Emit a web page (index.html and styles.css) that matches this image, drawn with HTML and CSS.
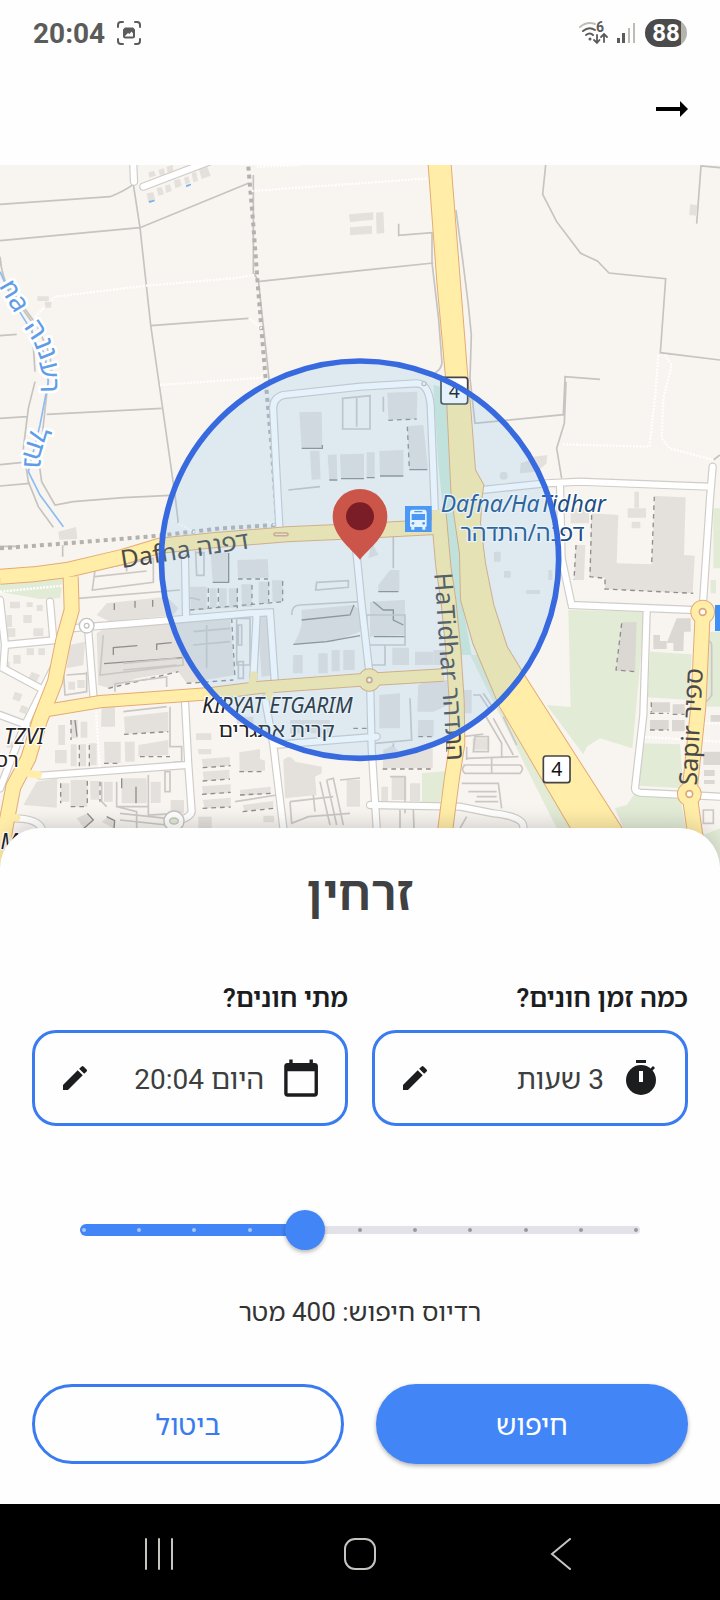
FILE: index.html
```html
<!DOCTYPE html>
<html lang="he" dir="rtl">
<head>
    <meta charset="UTF-8">
    <meta name="viewport" content="width=device-width, initial-scale=1.0">
    <title>זרחין</title>
    <link rel="stylesheet" href="styles.css">
</head>
<body>

    <!-- Status bar -->
    <div class="status-bar" dir="ltr">
        <span class="clock">20:04</span>
        <svg class="status-shot" viewBox="0 0 24 24" fill="none" stroke="#5a5c5a" stroke-width="2" stroke-linecap="round">
            <path d="M1 6V4a3 3 0 0 1 3-3h2M18 1h2a3 3 0 0 1 3 3v2M23 18v2a3 3 0 0 1-3 3h-2M6 23H4a3 3 0 0 1-3-3v-2"/>
            <path fill="#5a5c5a" fill-rule="evenodd" stroke="none" d="M8 6.500h8l2 2V15a2.500 2.500 0 0 1-2.500 2.500h-7A2.500 2.500 0 0 1 6 15V8.500zM8 15.500h8v-3l-1.500-2-2 2.500-1.500-1-3 3z"/>
        </svg>
        <div class="status-icons">
            <svg class="wifi" viewBox="0 0 30 24" fill="none" stroke="#5a5c5a" stroke-width="2" stroke-linecap="round">
                <path stroke="#bdbdb8" d="M1 6Q8 0 16 3"/>
                <path d="M4 10q6-5 12-1M7 14q4-3 7 0"/>
                <circle cx="11" cy="18" r="1.500" fill="#5a5c5a" stroke="none"/>
                <path stroke-width="1.800" d="M18 14v8m-3-3 3 3 2.500-3M25 21v-8m-3 3 3-3 3 3"/>
                <text class="wifi-gen" x="17" y="11">6</text>
            </svg>
            <svg class="signal" viewBox="0 0 20 20">
                <path fill="#5a5c5a" d="M0 15h3v5H0zM5 10h3v10H5z"/>
                <path fill="#bdbdb8" d="M11 5h2v15h-2zM16 0h2v20h-2z"/>
            </svg>
            <span class="battery">88</span>
        </div>
    </div>

    <!-- App bar -->
    <div class="app-bar">
        <button class="back-button" aria-label="חזרה">
            <svg viewBox="0 0 32 16"><path d="M0 6h24V0l8 8-8 8v-6H0z"/></svg>
        </button>
    </div>

    <!-- Map -->
    <svg class="map" viewBox="0 0 2160 2112" preserveAspectRatio="xMidYMin slice" direction="ltr">
        <!-- Parks -->
        <g class="park">
            <path d="M0 1255 100 1245 190 1240 180 1300 120 1302 0 1280z"/>
            <path d="M1705 1335 1935 1340 1897 1750 1800 1720 1760 1745 1750 1768 1640 1620 1712 1626z"/>
            <path d="M1950 1460 2075 1468 2068 1605 1943 1597zM1925 1735 2040 1738 2050 1870 1915 1862z"/>
            <path d="M1845 1930 1880 1920 1905 1885 2040 1895 2060 2000 1870 1990z"/>
            <path d="M1410 1470 1440 1470 1500 1610 1570 1750 1720 1989 1670 1989 1535 1720zM1266 1825 1340 1818 1320 1910 1266 1920z"/>
            <path d="M2140 1030h20v180h-20zM2132 1245h16v40h-16zM2120 1400h40v225h-40zM2110 2010 2160 1990v110z"/>
            <path fill="#d3ead9" d="M1300 660 1340 670 1355 995 1385 1165 1385 1305 1415 1470 1378 1470 1355 1250 1330 1040 1315 900z"/>
        </g>

        <!-- Fields and tracks -->
        <g class="track">
            <path d="M0 118 330 95 Q370 80 400 58M0 227 420 188 745 55M400 58 420 188 452 480 480 675 488 730 525 990 535 1075"/>
            <path d="M452 482 745 460M760 30V325L775 345 808 650M780 349 1080 317 1300 294M1637 0 1628 88 1670 170 1742 265 1792 288 1827 324 1997 341 1981 563 2160 585M2090 176 2103 3 2160 8"/>
            <path d="M1196 176v35l100-8v90l20 170 10 130q-2 20-20 30M1368 135 1390 300 1405 420 1414 510 1410 640 1425 775 1690 749 1695 640v-5l105 8M1698 650 1693 775 1670 850 1685 940M2160 870 2140 885"/>
            <path d="M0 760 80 755M140 748 485 730M0 899 70 892M0 963 90 955M30 370 110 480 150 570 155 620M0 275Q5 350 45 400L95 470 105 620M105 650 85 730 70 850 85 950 115 1025 160 1087M150 600 130 780 118 900 125 950 165 1020 220 1010 370 998 510 991M0 512 50 508"/>
            <path d="M188 1140v35M0 1144h60M1180 1110v100M865 975 960 965"/>
        </g>
        <path class="rail" d="M745 5 760 180 775 380 800 680 815 850 832 1080M0 1150 200 1135 480 1112 660 1090 830 1080"/>
        <g class="footpath">
            <path d="M755 78 1080 55 1285 40M105 455 165 395 440 362 700 340 765 330M480 660 790 638M750 462 785 490M770 5 900 0M535 1075 590 1105"/>
            <path d="M1975 570 1965 700 1948 845 1685 838M1995 570 2015 600 1990 700 1985 820 2010 850 2140 885M0 1280 190 1262M1925 1715 2160 1730M2105 1675h55M288 1640 300 1810M800 1070 860 1095"/>
        </g>

        <!-- River -->
        <path class="river" d="M0 320 40 410 90 490 135 570 145 650 120 780 85 920 120 990 190 1085"/>

        <!-- Buildings -->
        <g class="building">
            <path d="M445 22 462 17 468 32 448 38zM475 15 492 10 495 28 480 32zM500 5 518 0 520 18 503 24zM440 85 460 82 465 104 445 110zM470 70 485 66 492 88 475 92zM495 62 510 58 515 78 498 84zM522 46 540 42 545 62 526 70zM552 38 565 34 570 54 556 58zM575 25 588 20 594 48 580 52zM595 5 620 0 632 32 605 42z"/>
            <path d="M1047 148 1120 142v22l-70 7zM1050 187 1116 182v24l-66 5zM1128 143 1150 141 1153 204 1130 206zM112 394h34v14h-34zM134 410h20v18h-18zM2070 118 2092 120 2090 152 2068 150zM175 1100 228 1086 232 1122 178 1124z"/>
            <path d="M898 742 965 740 967 848 905 850zM930 858 958 857 962 943 935 944zM983 870 1010 868 1012 942 988 945zM1020 868 1092 866 1092 940 1023 942zM1100 862h24v74h-24zM1138 858 1210 855v75l-70 3zM1162 683 1252 680 1250 762 1165 766zM1222 783 1270 780 1284 912 1228 914z"/>
            <path d="M632 1166 685 1162 685 1250 638 1252zM712 1185 803 1182 806 1238 714 1242zM570 1265h50v70h-48zM628 1270h22v60h-20zM656 1270h24v60h-22zM686 1270h26v58h-24zM724 1258h32v68h-30zM776 1250h30v66h-30zM816 1246h32v66h-30z"/>
            <path d="M1562 895 1592 885 1600 875 1642 870 1640 895 1610 920 1560 925z"/>
            <circle cx="1511" cy="932" r="12"/>
            <path d="M1965 993 2057 997 2052 1170 2084 1172 2078 1285 1815 1272V1238L1768 1236 1775 1045 1855 1050 1850 1195 1955 1198zM1728 1140h28l-4 105h-30zM1712 1030h55v45h-55zM1883 1030h55v28h-55zM1903 980h14v48h-14zM1895 1070h26v20h-26z"/>
            <path d="M1482 1160h20v30h-20zM1512 1218h20v20h-20zM1645 1215h12v30h-12zM1578 1275h42v12h-42zM1170 1215 1198 1215 1198 1280 1135 1280 1135 1260zM1115 1130 1135 1170 1105 1180z"/>
            <path d="M290 1405 320 1385 500 1370 560 1345 690 1355 705 1530 560 1555 535 1520 410 1540 330 1570 295 1560z"/>
            <path d="M320 1315 500 1295 535 1330 520 1350 330 1370 290 1350zM210 1440 255 1430 250 1500 200 1510zM205 1550h20v24h-20zM232 1545h22v24h-22z"/>
            <path d="M905 1335 1060 1320 1080 1335 1080 1400 1000 1430 880 1440 895 1410 905 1380zM1110 1310 1215 1305 1215 1410 1110 1415zM880 1470h28v55h-30zM955 1465h28v60h-28zM995 1455h24v64h-24zM1030 1455h34v60h-34z"/>
            <path d="M770 1345h45l10 185-40 5zM1177 1448h50v52h-50zM1245 1460h54v40h-54zM1300 1455h40v45h-40zM1255 1560 1290 1545 1350 1545 1345 1620 1300 1640h-48zM1138 1590 1200 1585V1690h-62zM1255 1665h46v50h-48zM1385 1575h30v70h-28z"/>
            <path d="M305 1625h40v60h-42zM372 1655 505 1640v60l-130 6zM175 1680h20v60h-20zM213 1665h20v55h-20zM242 1670h20v48h-20zM165 1755h35v40h-35zM212 1738h18v66h-18zM238 1738h20v66h-20zM268 1735h22v66h-22zM312 1730h50v64h-48zM374 1730h30v60h-28zM415 1740 505 1725v45l-90 5z"/>
            <path d="M70 1920 110 1850 172 1840 170 1928zM182 1855h26v55h-26zM212 1845h50v80h-50zM270 1848h28v56h-26zM312 1850h26v60h-26zM365 1840h75v75h-75zM452 1850h30v64h-30zM512 1905h40v40h-40zM230 1960 262 1945 280 1965 252 1990zM305 1970 325 1955 345 1965 340 1990zM595 1955h40v34h-40z"/>
            <path d="M588 1705h46v20h-46zM594 1752h40v16h-38zM605 1782 690 1776v26l-80 6zM608 1820 688 1814v28l-76 6zM606 1864 692 1858v26l-82 4zM608 1905 692 1898v28l-78 4zM718 1762 780 1752v30l15 5v30l-76 4zM720 1875 812 1865v20l-90 8zM728 1920 820 1908v20l-86 10zM790 1952h32v20h-32zM710 1655h50v35h-50zM870 1665h120v40H870z"/>
            <path d="M850 1785q20-20 35 5l80 15v20l-20 10 5 55-95 10zM1040 1845h40v80h-40zM1150 1755 1180 1740 1200 1765 1240 1745 1298 1750v60h-150zM1175 1835h44v70h-44zM1144 1865h20v46h-20zM1230 1855h30v54h-30zM1418 1720h50v34h-50z"/>
            <path d="M30 1310h30v20H30zM80 1312h18v14H80zM20 1350h16v36H20zM70 1350h25v24H70zM110 1320h18v18h-18zM20 1390h26v26H20zM100 1390h30v24h-30zM80 1450h22v20H80zM115 1450h20v20h-20zM40 1470h22v26H40zM95 1520l25 10-12 24-24-10zM45 1580l22 8-8 22-22-8zM15 1490h14v22H15zM65 1620l20 8-8 20-20-8zM20 1730h18v18H20z"/>
            <path fill="#dbd7d2" d="M1865 1372h45l-5 146h-55zM2030 1360h42v40h-20l-2 58h-30v-24h-20zM1960 1410h20v18h20v24h-40zM1954 1612h56v30h-56zM2018 1618h36v28h-36zM1950 1665h56v30h-56zM2016 1665h38v34h-38zM2132 1650h28v20h-28zM2110 1760h50v40h-50zM2112 1815h32v18h-32zM2112 1845h32v12h-32z"/>
        </g>
        <g class="pool">
            <path d="M446 108 464 104v5l-16 5zM558 60 573 56v5l-14 6z"/>
        </g>

        <!-- Dark sides of the buildings -->
        <g class="shade">
            <path d="M905 850h62v-10M988 945h24M1023 941h69M638 1252h48v-88M1228 914h54M1100 938h24M1140 933h70M1135 1280h60M905 1365 1050 1350 1062 1320M880 1438 980 1430 1080 1412M340 1470v-22l72-6M470 1455v-18l45-4M312 1496 550 1478M1120 1310 1150 1335h30v30l30 15M1122 1415h95"/>
            <path stroke-dasharray="14 12" d="M1728 1140 1722 1245M1775 1050 1770 1235 1815 1240V1272L2080 1285M1963 995 1955 1195M1165 766 1250 762M1222 785 1228 910M1865 1375 1848 1515 1905 1520M570 1335 850 1310M625 1270v60M655 1270v60M712 1270v60M756 1260v60M806 1250v60M848 1248v60M714 1242h90M372 1708 505 1700M213 1665v60M238 1740v64M268 1740v64M312 1795h50M420 1775h90M182 1855v60M212 1925h50M262 1848v70M300 1850v60M608 1808 692 1802M608 1848 690 1842M606 1888 692 1882M608 1930 692 1926M720 1890 812 1885M728 1940 820 1930M718 1820h76M695 1360l10 180M560 1555 700 1545M325 1570 535 1520M1060 1690h60M1255 1715h46M1148 1812h150M1950 1645h56M1950 1695h56M1954 1612v30M2018 1648h36"/>
            <path d="M343 1315v20M405 1308v20M458 1305v20M262 1945 280 1965 252 1990M320 1955l24 12-2 23M365 1840v30M408 1865v50M225 1665l6 50M1340 1720v40"/>
        </g>

        <!-- Small lanes drawn as outlines -->
        <g class="lane">
            <path d="M285 1215 460 1180V1252L277 1275zM285 1235 440 1218M380 1195v24M235 1300 540 1275M590 1163h22v68h-22l-3-70zM950 1252 1045 1247v20l-98 8zM1070 695v90M1028 700 1110 692v100h-82zM1150 740v-45M875 1350q0-30 25-30l180-10M700 1360h50v140h-40v-140M715 1380h10v60h-10zM715 1490h15v50h-15zM345 1580v-24l155-20v30M370 1640 500 1625M510 1625v120h35v45l-130 15M190 1510l5 80 65-10v-60M200 1530 262 1525"/>
            <path d="M305 1850v60l15 15M350 1850v75l60 15v50M445 1830v120l90-5M360 1945 500 1960M360 1965 500 1980M350 1925h95M495 1820h15v60h-15zM705 1910 830 1890M870 1910l5 65 50-20 125-10M870 1910 1000 1895M940 1890l5 50M960 1850l30 130M980 1845l30 135M980 1845l20-5 30 140M1020 1845l60-6"/>
            <path d="M1095 1440h60v60h-60zM1125 1735l110-10-5-125M1100 1350h115v90h-115zM1130 1960 1125 1940M1170 1835h45v110M1180 1735v10M1455 1650l50 85v40M1390 1715l60-8M1400 1780l155-5M1390 1800h170q15 10 0 25h-165q-15-12 0-25M1475 1775v50M1385 1855h110l10 75M1405 1880h85M1430 1895h60M1425 1910h70M1480 1660l60 110M1510 1655l40 85M1420 1590h20l30 45M1450 1585l30 45M1425 1715h40v45h-45zM1400 1745v40M2110 1935h30v40h-30zM2115 1435q15-15 20 5v150q-10 20-30 25M1240 1935l2 54M1200 1935v54M1400 1955l-20 35M600 1305q-60-20-45 25M310 1410 300 1530 550 1500 545 1440M580 1400 690 1390M580 1440 690 1430M620 1380v130M370 1515 530 1500M370 1495 530 1480"/>
        </g>

        <!-- Streets -->
        <g class="street-case">
            <path d="M400 0 402 50M430 65 640-15"/>
            <path d="M838 1085 828 900 820 740Q815 700 850 690L1080 665 1250 655Q1285 655 1292 720L1305 1050"/>
            <path d="M1445 975 1640 955 1740 950 2130 965M2138 905 2130 1000 2108 1330M1680 960 1685 1180 1715 1320 2080 1335M1940 1340 1930 1650 1905 1870Q1905 1880 1920 1883L2060 1890 2160 1895"/>
            <path d="M555 1180 558 1350M215 1390 270 1385 400 1375 750 1345 810 1342 825 1560M265 1400 280 1590M770 1350 760 1540M1065 1120 1085 1320 1110 1540 1115 1750 1130 1989M555 1610 565 1800 575 1940Q570 1960 520 1970M120 1832 560 1800M795 1600 820 1740 850 1989M820 1740 1130 1715"/>
            <path d="M0 1305 15 1440 170 1425M150 1310 160 1425M15 1440 10 1510 140 1580M160 1510 70 1690 0 1870M0 1650 80 1680M40 1960Q110 1960 125 1990M1110 1920 1380 1925 1480 1945Q1575 1955 1570 1989"/>
        </g>
        <g class="street">
            <path d="M400 0 402 50M430 65 640-15"/>
            <path d="M838 1085 828 900 820 740Q815 700 850 690L1080 665 1250 655Q1285 655 1292 720L1305 1050"/>
            <path d="M1445 975 1640 955 1740 950 2130 965M2138 905 2130 1000 2108 1330M1680 960 1685 1180 1715 1320 2080 1335M1940 1340 1930 1650 1905 1870Q1905 1880 1920 1883L2060 1890 2160 1895"/>
            <path d="M555 1180 558 1350M215 1390 270 1385 400 1375 750 1345 810 1342 825 1560M265 1400 280 1590M770 1350 760 1540M1065 1120 1085 1320 1110 1540 1115 1750 1130 1989M555 1610 565 1800 575 1940Q570 1960 520 1970M120 1832 560 1800M795 1600 820 1740 850 1989M820 1740 1130 1715"/>
            <path d="M0 1305 15 1440 170 1425M150 1310 160 1425M15 1440 10 1510 140 1580M160 1510 70 1690 0 1870M0 1650 80 1680M40 1960Q110 1960 125 1990M1110 1920 1380 1925 1480 1945Q1575 1955 1570 1989"/>
        </g>
        <g class="island">
            <circle cx="260" cy="1382" r="22"/><circle cx="260" cy="1382" r="7"/>
            <circle cx="522" cy="1968" r="30"/><ellipse cx="522" cy="1968" rx="13" ry="9" fill="#deebd0"/>
            <circle cx="1272" cy="656" r="6"/>
        </g>

        <!-- Main roads -->
        <g class="road-case">
            <path d="M0 1235 100 1228 200 1215 370 1175 480 1142 640 1126 860 1108 1080 1098 1320 1085"/>
            <path d="M212 1235 215 1335 190 1425 165 1550 120 1665 85 1780 40 1865 15 1995 0 2112"/>
            <path d="M120 1640 300 1610 640 1585 780 1567 1080 1545 1330 1530" stroke-width="40"/>
            <path d="M1315 1035 1330 1205 1345 1305 1360 1455 1370 1605 1372 1735 1355 1845 1335 2000"/>
            <path d="M2108 1345 2095 1625 2068 1885 2085 2005 2110 2112"/>
            <circle cx="2108" cy="1341" r="34"/><circle cx="2068" cy="1887" r="34"/><circle cx="1108" cy="1545" r="32"/>
            <path d="M1286 0 1312 350 1338 635 1342 720 1355 995 1380 1165 1383 1305 1420 1435 1500 1625 1640 1865 1760 2070 1910 2070 1865 1989 1575 1535 1520 1445 1480 1320 1455 1195 1440 1075 1445 995 1450 960 1425 915 1410 720 1402 635 1352 0z" stroke-width="6"/>
        </g>
        <g class="road">
            <path d="M0 1235 100 1228 200 1215 370 1175 480 1142 640 1126 860 1108 1080 1098 1320 1085"/>
            <path d="M212 1235 215 1335 190 1425 165 1550 120 1665 85 1780 40 1865 15 1995 0 2112"/>
            <path d="M120 1640 300 1610 640 1585 780 1567 1080 1545 1330 1530" stroke-width="34"/>
            <path d="M1315 1035 1330 1205 1345 1305 1360 1455 1370 1605 1372 1735 1355 1845 1335 2000"/>
            <path d="M2108 1345 2095 1625 2068 1885 2085 2005 2110 2112"/>
            <path d="M762 1530 755 1560M805 1595 812 1570M85 1825 115 1830M20 1960 50 1958" stroke-width="22" stroke-linecap="round"/>
            <g fill="#ffeda8" stroke="none">
                <circle cx="2108" cy="1341" r="34"/><circle cx="2068" cy="1887" r="34"/><circle cx="1108" cy="1545" r="32"/>
                <path d="M1286 0 1312 350 1338 635 1342 720 1355 995 1380 1165 1383 1305 1420 1435 1500 1625 1640 1865 1760 2070 1910 2070 1865 1989 1575 1535 1520 1445 1480 1320 1455 1195 1440 1075 1445 995 1450 960 1425 915 1410 720 1402 635 1352 0z"/>
            </g>
        </g>
        <g class="roundabout">
            <circle cx="2108" cy="1341" r="10"/><circle cx="2068" cy="1887" r="10"/><circle cx="1108" cy="1545" r="8"/>
            <rect x="822" y="1104" width="42" height="8" rx="4"/>
        </g>

        <!-- Bus stops -->
        <path fill="#3f8ff7" d="M1215 1023h80v78h-80zM2145 1320h15v78h-15z"/>
        <g fill="#fff">
            <path d="M1236 1034h38q6 0 6 8v40q0 4-4 4v8h-9v-8h-24v8h-9v-8q-4 0-4-4v-40q0-8 6-8z"/>
            <path fill="#3f8ff7" d="M1235 1047h40v18h-40zM1243 1038h24v4h-24z"/>
            <circle cx="1239" cy="1075" r="4" fill="#3f8ff7"/><circle cx="1271" cy="1075" r="4" fill="#3f8ff7"/>
        </g>

        <!-- Labels -->
        <path id="river-line" fill="none" d="M-15 345 50 455 100 530 120 580 122 680 100 770 75 850 68 960"/>
        <g class="map-label river-label">
            <text><textPath href="#river-line" startOffset="20">na</textPath></text>
            <text><textPath href="#river-line" startOffset="165">רעננה</textPath></text>
            <text><textPath href="#river-line" startOffset="475">נחל</textPath></text>
        </g>
        <g class="map-label street-label">
            <text transform="translate(366 1210) rotate(-9)">Dafna דפנה</text>
            <text transform="translate(1303 1225) rotate(86)">HaTidhar התדהר</text>
            <text transform="translate(2090 1862) rotate(-87)">Sapir ספיר</text>
        </g>
        <g class="map-label area-label">
            <text x="832" y="1645">KIRYAT ETGARIM</text>
            <text x="830" y="1717" class="upright">קרית אתגרים</text>
            <text x="72" y="1737">TZVI</text>
            <text x="20" y="1806" class="upright">רס</text>
            <text x="28" y="2052">M</text>
        </g>
        <g class="map-label stop-label">
            <text x="1570" y="1042">Dafna/HaTidhar</text>
            <text x="1567" y="1128" class="upright">דפנה/התדהר</text>
        </g>
        <g class="shield">
            <rect x="1323" y="637" width="80" height="80" rx="8"/>
            <text x="1363" y="698">4</text>
            <rect x="1630" y="1773" width="80" height="80" rx="8"/>
            <text x="1670" y="1834">4</text>
        </g>

        <!-- Search radius and pin -->
        <circle class="radius-area" cx="1080" cy="1184" r="596"/>
        <path fill="#cb5549" d="M1080 1184C1050 1148 998 1112 998 1054a82 82 0 0 1 164 0C1162 1112 1110 1148 1080 1184z"/>
        <circle cx="1080" cy="1054" r="42" fill="#7b1d27"/>
    </svg>

    <!-- Search sheet -->
    <div class="sheet">
        <h1>זרחין</h1>

        <div class="fields">
            <div class="field">
                <label for="duration">כמה זמן חונים?</label>
                <button id="duration" class="picker">
                    <svg class="picker-icon" viewBox="0 0 44 44">
                        <circle cx="22" cy="24" r="15"/>
                        <path d="M17 4h10v3H17zM31 13l3-3 2 2-3 3z"/>
                        <path fill="#fff" d="M20 15h4v11h-4z"/>
                    </svg>
                    <span class="picker-value">3 שעות</span>
                    <svg class="edit-icon" viewBox="0 0 24 24"><path d="M3 17.250V21h3.750L17.810 9.940l-3.750-3.750zM20.710 7.040a1 1 0 0 0 0-1.410l-2.340-2.340a1 1 0 0 0-1.410 0l-1.830 1.830 3.750 3.750z"/></svg>
                </button>
            </div>
            <div class="field">
                <label for="start">מתי חונים?</label>
                <button id="start" class="picker">
                    <svg class="picker-icon" viewBox="0 0 24 24"><path d="M20 3h-1V1h-2v2H7V1H5v2H4a2 2 0 0 0-2 2v16a2 2 0 0 0 2 2h16a2 2 0 0 0 2-2V5a2 2 0 0 0-2-2zm0 18H4V8h16z" transform="translate(1 1) scale(.92)"/></svg>
                    <span class="picker-value">היום 20:04</span>
                    <svg class="edit-icon" viewBox="0 0 24 24"><path d="M3 17.250V21h3.750L17.810 9.940l-3.750-3.750zM20.710 7.040a1 1 0 0 0 0-1.410l-2.340-2.340a1 1 0 0 0-1.410 0l-1.830 1.830 3.750 3.750z"/></svg>
                </button>
            </div>
        </div>

        <div class="slider" dir="ltr">
            <div class="slider-track"></div>
            <div class="slider-fill"></div>
            <div class="slider-ticks">
                <i></i><i></i><i></i><i></i><i></i><i></i><i></i><i></i><i></i><i></i><i></i>
            </div>
            <input type="range" id="radius" min="0" max="1000" step="100" value="400">
        </div>
        <label class="radius-text" for="radius">רדיוס חיפוש: 400 מטר</label>

        <div class="actions">
            <button class="btn btn-primary">חיפוש</button>
            <button class="btn btn-outline">ביטול</button>
        </div>
    </div>

    <!-- System navigation -->
    <div class="nav-bar" dir="ltr">
        <button aria-label="Recents"><svg viewBox="0 0 32 32"><path d="M3 1v30M16 1v30M29 1v30"/></svg></button>
        <button aria-label="Home"><svg viewBox="0 0 32 32"><rect x="1" y="1" width="30" height="30" rx="10"/></svg></button>
        <button aria-label="Back"><svg viewBox="0 0 32 32"><path d="M25 1 7 16l18 15"/></svg></button>
    </div>

</body>
</html>
```
FILE: styles.css
```css
/* General Styles */
* {
    box-sizing: border-box;
}

body {
    margin: 0;
    min-height: 100vh;
    display: flex;
    flex-direction: column;
    font-family: Roboto, "Noto Sans Hebrew", "Open Sans", "Noto Sans", sans-serif;
    background: #fefefe;
    color: #1c1d1e;
}

button {
    padding: 0;
    border: none;
    background: none;
    font: inherit;
    color: inherit;
    cursor: pointer;
}

/* Status Bar */
.status-bar {
    display: flex;
    align-items: center;
    height: 66px;
    padding: 0 33px;
    color: #5a5c5a;
}

.clock {
    font-size: 28px;
    font-weight: bold;
}

.status-shot {
    width: 24px;
    height: 24px;
    margin-left: 12px;
}

.status-icons {
    display: flex;
    align-items: center;
    gap: 8px;
    margin-left: auto;
}

.wifi {
    width: 30px;
    height: 24px;
    overflow: visible;
}

.wifi-gen {
    font-size: 14px;
    font-weight: bold;
    fill: #5a5c5a;
    stroke: none;
}

.signal {
    width: 20px;
    height: 20px;
}

.battery {
    width: 42px;
    line-height: 28px;
    border-radius: 14px;
    text-align: center;
    font-size: 24px;
    font-weight: bold;
    color: #fff;
    background: linear-gradient(to right, #4b4b4b 86%, #b4b4ae 86%);
}

/* App Bar */
.app-bar {
    height: 99px;
    padding: 27px 32px;
}

.back-button {
    display: flex;
    align-items: center;
    width: 32px;
    height: 32px;
}

.back-button svg {
    width: 32px;
    height: 16px;
}

/* Map */
.map {
    display: block;
    width: 100%;
    height: 704px;
    background: #f8f4f0;
}

.park {
    fill: #e2ebd6;
}

.track {
    fill: none;
    stroke: #c6c4c0;
    stroke-width: 5;
}

.rail {
    fill: none;
    stroke: #b4b2af;
    stroke-width: 12;
    stroke-dasharray: 12 12;
}

.footpath {
    fill: none;
    stroke: #fff;
    stroke-width: 7;
    stroke-dasharray: 6 4;
}

.river {
    fill: none;
    stroke: #8dbcf2;
    stroke-width: 5;
}

.building {
    fill: #e4e0db;
}

.pool {
    fill: #74b2f0;
}

.shade {
    fill: none;
    stroke: #8f8e8c;
    stroke-width: 4;
}

.lane {
    fill: none;
    stroke: #cac8c5;
    stroke-width: 5;
}

.street-case {
    fill: none;
    stroke: #d0cdc9;
    stroke-width: 25;
    stroke-linecap: round;
}

.street {
    fill: none;
    stroke: #fff;
    stroke-width: 18;
    stroke-linecap: round;
}

.island {
    fill: #fff;
    stroke: #c6c4c0;
    stroke-width: 4;
}

.road-case {
    fill: none;
    stroke: #e5ab72;
    stroke-width: 48;
}

.road-case circle {
    stroke-width: 6;
}

.road {
    fill: none;
    stroke: #ffeda8;
    stroke-width: 42;
}

.roundabout {
    fill: #fff;
    stroke: #e0a673;
    stroke-width: 5;
}

.map-label {
    font-family: "Noto Sans", "Noto Sans Hebrew", "Open Sans", sans-serif;
    paint-order: stroke;
    stroke: #fff;
    stroke-width: 8;
    stroke-linejoin: round;
}

.river-label {
    font-size: 84px;
    fill: #5f9de6;
    stroke-width: 16;
}

.street-label {
    font-size: 75px;
    fill: #4a4a4a;
    stroke: none;
}

.area-label {
    font-size: 63px;
    font-style: italic;
    fill: #222;
    text-anchor: middle;
}

.stop-label {
    font-size: 69px;
    font-style: italic;
    fill: #1d4f85;
    text-anchor: middle;
}

.area-label .upright,
.stop-label .upright {
    font-style: normal;
}

.shield rect {
    fill: #fff;
    stroke: #444;
    stroke-width: 5;
}

.shield text {
    font-family: "Noto Sans", sans-serif;
    font-size: 58px;
    text-anchor: middle;
    fill: #111;
}

.radius-area {
    fill: rgba(123, 189, 240, 0.2);
    stroke: #3769df;
    stroke-width: 17;
}

/* Search Sheet */
.sheet {
    position: relative;
    margin-top: -41px;
    padding: 34px 32px 40px;
    border-radius: 40px 40px 0 0;
    background: #fefefe;
    box-shadow: 0 -4px 20px rgba(0, 0, 0, 0.15);
}

.sheet h1 {
    margin: 0 0 56px;
    text-align: center;
    font-size: 48px;
    line-height: 64px;
    font-weight: 600;
    color: #3f4143;
}

.fields {
    display: flex;
    gap: 24px;
}

.field {
    flex: 1;
}

.field label {
    display: block;
    margin-bottom: 16px;
    font-size: 26px;
    line-height: 32px;
    font-weight: 600;
}

.picker {
    display: flex;
    align-items: center;
    width: 100%;
    height: 96px;
    padding: 0 22px 0 24px;
    border: 3px solid #3a7cf0;
    border-radius: 24px;
}

.picker-icon {
    width: 44px;
    height: 44px;
    margin-left: 15px;
    fill: #1c1d1e;
}

.picker-value {
    font-size: 28px;
    color: #3c3e40;
}

.edit-icon {
    width: 32px;
    height: 32px;
    margin-right: auto;
    fill: #1c1d1e;
}

/* Radius Slider */
.slider {
    display: grid;
    align-items: center;
    margin: 84px 32px 46px;
}

.slider > * {
    grid-area: 1 / 1;
}

.slider-track {
    height: 8px;
    margin: 0 16px;
    border-radius: 4px;
    background: #e3e2e9;
}

.slider-fill {
    width: 38%;
    height: 12px;
    margin-left: 16px;
    border-radius: 6px;
    background: #4285f7;
}

.slider-ticks {
    display: flex;
    justify-content: space-between;
    margin: 0 18px;
}

.slider-ticks i {
    width: 4px;
    height: 4px;
    border-radius: 50%;
    background: #9a9a9c;
}

.slider-ticks i:nth-child(-n + 4) {
    background: #a9c6f8;
}

.slider input {
    width: 100%;
    height: 40px;
    margin: 0;
    appearance: none;
    background: none;
}

.slider input::-webkit-slider-thumb {
    appearance: none;
    width: 40px;
    height: 40px;
    border-radius: 50%;
    background: #4285f7;
    box-shadow: 0 2px 4px rgba(0, 0, 0, 0.3);
}

.radius-text {
    display: block;
    text-align: center;
    font-size: 26px;
    line-height: 32px;
    color: #333;
}

/* Buttons */
.actions {
    display: grid;
    grid-template-columns: 1fr 1fr;
    gap: 32px;
    margin-top: 56px;
}

.btn {
    height: 80px;
    border-radius: 40px;
    font-size: 28px;
}

.btn-primary {
    background: #4285f7;
    color: #fff;
    box-shadow: 0 2px 4px rgba(0, 0, 0, 0.3);
}

.btn-outline {
    border: 3px solid #3a7cf0;
    color: #3a7cf0;
}

/* System Navigation */
.nav-bar {
    display: flex;
    flex: 1;
    align-items: center;
    justify-content: space-around;
    min-height: 96px;
    padding: 4px 58px 0;
    background: #000;
}

.nav-bar svg {
    display: block;
    width: 32px;
    height: 32px;
    fill: none;
    stroke: #c4c4c0;
    stroke-width: 2;
    stroke-linecap: round;
}
```
